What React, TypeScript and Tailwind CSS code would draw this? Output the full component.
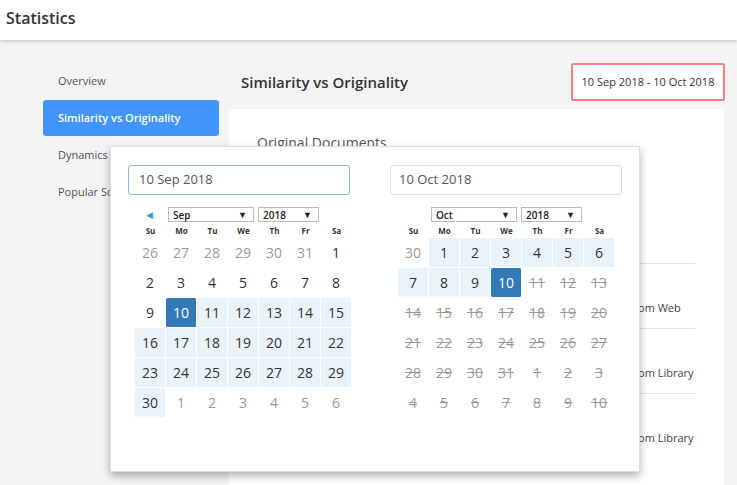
import React from "react";

type Day = { n: number; kind: "in" | "out" | "off"; range?: boolean; sel?: boolean };

const sepDays: Day[] = [
    ...[26, 27, 28, 29, 30, 31].map((n) => ({ n, kind: "out" as const })),
    ...Array.from({ length: 30 }, (_, i) => {
        const n = i + 1;
        return { n, kind: "in" as const, range: n >= 10, sel: n === 10 };
    }),
    ...[1, 2, 3, 4, 5, 6].map((n) => ({ n, kind: "out" as const })),
];

const octDays: Day[] = [
    { n: 30, kind: "out" },
    ...Array.from({ length: 31 }, (_, i) => {
        const n = i + 1;
        if (n <= 10) return { n, kind: "in" as const, range: true, sel: n === 10 };
        return { n, kind: "off" as const };
    }),
    ...[1, 2, 3, 4, 5, 6, 7, 8, 9, 10].map((n) => ({ n, kind: "off" as const })),
];

const weekDays = ["Su", "Mo", "Tu", "We", "Th", "Fr", "Sa"];

const FakeSelect = ({ label, width }: { label: string; width: string }) => (
    <div className={`${width} h-[15px] border border-[#bbb] bg-white flex items-center justify-between pl-1 pr-[6px] text-[10px] font-semibold text-[#222] leading-none`}>
        <span>{label}</span>
        <span className="text-[9px]">▼</span>
    </div>
);

const Calendar = ({ month, days, showPrev }: { month: string; days: Day[]; showPrev?: boolean }) => (
    <div className="w-[217px]">
        {/* month / year pickers */}
        <div className="flex items-center h-[15px]">
            <div className="w-[33px] pl-[11px] text-[9px] text-[#3c9ce0] leading-none">{showPrev ? "◀" : ""}</div>
            <FakeSelect label={month} width="w-[86px]" />
            <div className="w-1" />
            <FakeSelect label="2018" width="w-[61px]" />
        </div>
        <div className="grid grid-cols-7 mt-[2px] h-[14px] items-center">
            {weekDays.map((d) => (
                <div key={d} className="text-center text-[8px] font-bold text-[#333]">{d}</div>
            ))}
        </div>
        <div className="grid grid-cols-7">
            {days.map((d, i) => {
                let cls = "text-[#333]";
                if (d.kind === "out") cls = "text-[#999]";
                if (d.kind === "off") cls = "text-[#999] line-through";
                if (d.range) cls += " bg-[#eaf3fa]";
                if (d.sel) cls = "bg-[#337ab7] text-white rounded-[2px]";
                return (
                    <div
                        key={i}
                        className={`h-[30px] flex items-center justify-center text-[14px] border-r border-b border-white ${cls}`}
                    >
                        {d.n}
                    </div>
                );
            })}
        </div>
    </div>
);

const App: React.FC = () => {
    return (
        <div
            className="relative w-[737px] h-[485px] overflow-hidden bg-[#f3f4f6]"
            style={{ fontFamily: '"Open Sans", "Noto Sans", sans-serif' }}
        >
            {/* Header */}
            <div className="relative z-10 h-10 bg-white shadow-[0_1px_4px_rgba(0,0,0,0.22)] flex items-center px-[6px] pb-1">
                <h1 className="text-[16px] font-semibold text-[#333]">Statistics</h1>
            </div>

            <div className="flex">
                {/* Sidebar */}
                <div className="ml-[43px] w-[176px] pt-[23px] flex flex-col gap-px">
                    <div className="h-9 flex items-center pl-[15px] text-[11px] text-[#555]">Overview</div>
                    <div className="h-9 flex items-center pl-[15px] text-[11px] font-semibold text-white bg-[#4394fc] rounded-[3px]">
                        Similarity vs Originality
                    </div>
                    <div className="h-9 flex items-center pl-[15px] text-[11px] text-[#555]">Dynamics</div>
                    <div className="h-9 flex items-center pl-[15px] text-[11px] text-[#555] whitespace-nowrap">Popular Sources</div>
                </div>

                {/* Main */}
                <div className="ml-[10px] w-[495px] pt-[23px]">
                    <div className="flex items-center justify-between h-[38px] mb-[8px]">
                        <h2 className="pl-[12px] text-[15px] font-semibold text-[#333]">Similarity vs Originality</h2>
                        <div className="-mr-px h-[38px] w-[154px] border-2 border-[#ff7f7f] rounded-[2px] bg-white flex items-center justify-center text-[11px] text-[#333]">
                            10 Sep 2018 - 10 Oct 2018
                        </div>
                    </div>

                    {/* Card */}
                    <div className="bg-white rounded-[3px] h-[400px] pt-[24px]">
                        <div className="pl-[28px] text-[14px] text-[#555] leading-5">Original Documents</div>
                        <div className="ml-[331px] w-[135px] mt-[110px]">
                            {["Copied from Web", "Copied from Library", "Copied from Library"].map((t, i) => (
                                <div key={i} className="h-[65px] border-t border-[#e3e3e3] pt-[36px] pl-[31px] text-[11px] text-[#444] whitespace-nowrap">
                                    {t}
                                </div>
                            ))}
                        </div>
                    </div>
                </div>
            </div>

            {/* Date range popup */}
            <div className="absolute left-[110px] top-[146px] w-[530px] h-[326px] bg-white border border-[#ddd] shadow-[0_4px_8px_rgba(0,0,0,0.3)] z-20">
                <div className="flex">
                    <div className="pl-[17px] pt-[18px]">
                        <div className="w-[222px] h-[30px] border border-[#8fb5d9] rounded-[3px] flex items-center pl-[10px] text-[13px] text-[#555]">
                            10 Sep 2018
                        </div>
                        <div className="ml-[7px] mt-[12px]">
                            <Calendar month="Sep" days={sepDays} showPrev />
                        </div>
                    </div>
                    <div className="pl-[38px] pt-[18px]">
                        <div className="w-[232px] h-[30px] border border-[#ddd] rounded-[3px] flex items-center pl-[8px] text-[13px] text-[#555]">
                            10 Oct 2018
                        </div>
                        <div className="ml-[8px] mt-[12px]">
                            <Calendar month="Oct" days={octDays} />
                        </div>
                    </div>
                </div>
            </div>
        </div>
    );
};

export default App;
